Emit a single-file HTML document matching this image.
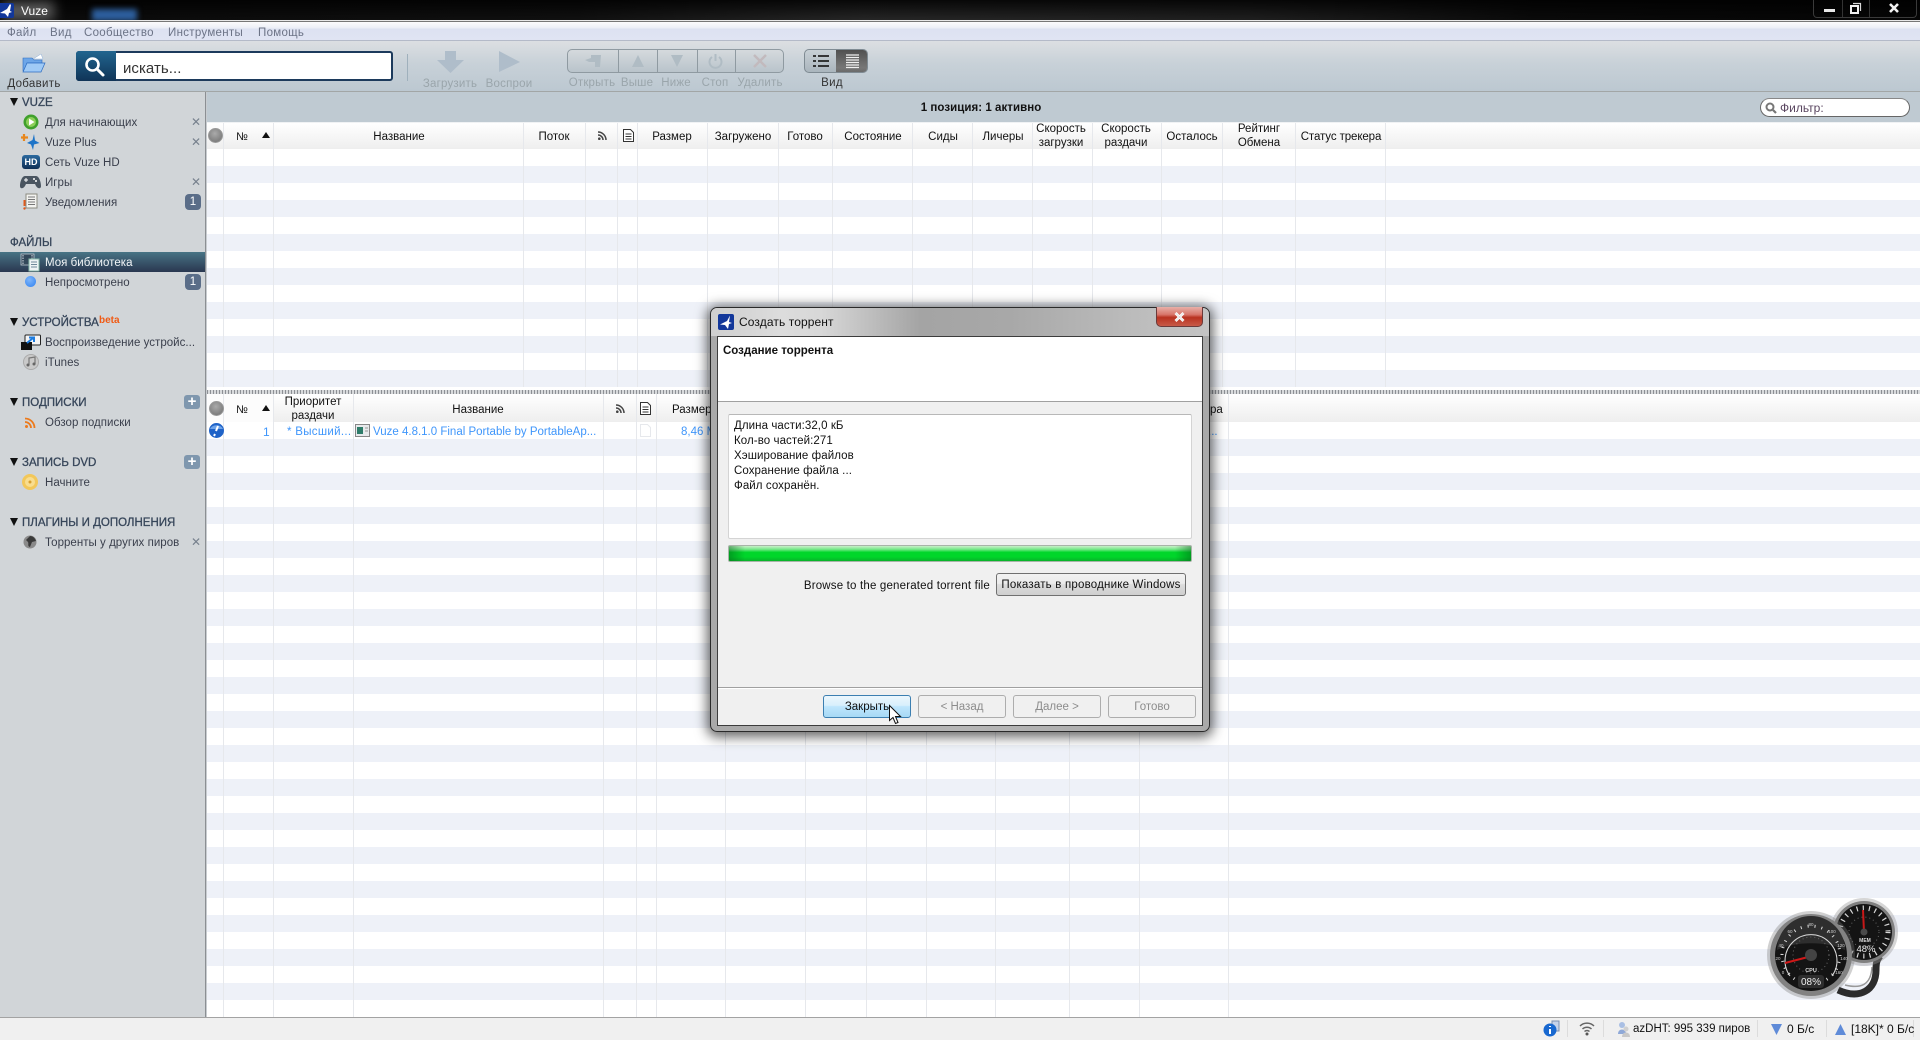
<!DOCTYPE html>
<html><head><meta charset="utf-8"><title>Vuze</title>
<style>
html,body{margin:0;padding:0;width:1920px;height:1040px;overflow:hidden;background:#fff}
*{box-sizing:border-box}
body{position:relative;font-family:"Liberation Sans","DejaVu Sans",sans-serif;font-size:11.5px;color:#111}
.a{position:absolute}
.t{position:absolute;white-space:nowrap;line-height:14px;height:14px;margin-top:1px}
.c{transform:translateX(-50%)}
.hd{text-align:center;line-height:13.5px;height:27px;font-size:11.5px;color:#111}
svg{position:absolute;overflow:visible}
.m{color:#6c7386;font-size:11.5px;top:25px;letter-spacing:.3px}
.s{color:#3a3f4c;font-size:11.5px;left:45px;letter-spacing:.03px}
.h{color:#37465a;font-size:11.5px;left:22px;-webkit-text-stroke:.3px #37465a}
.tri{position:absolute;left:10px;width:0;height:0;border-left:4px solid transparent;border-right:4px solid transparent;border-top:8px solid #111}
.x{position:absolute;left:191px;color:#77818d;font-size:12px;line-height:12px;font-weight:bold}
.bd{position:absolute;left:185px;width:16px;height:16px;background:#5a6d88;border-radius:4px;color:#fff;text-align:center;line-height:16px;font-size:11.5px}
.pl{position:absolute;left:184px;width:16px;height:14px;background:#7f97ae;border-radius:3px;color:#fff;text-align:center;line-height:13px;font-size:15px;font-weight:bold}
.v{position:absolute;width:1px;background:#e6e8ec}
.tl{color:#9aa5ab;font-size:11.5px;top:75px;letter-spacing:.2px}
.btn{position:absolute;border:1px solid #adadad;border-radius:3px;background:#f0f0f0;color:#8c8c8c;text-align:center;font-size:11.5px;line-height:23px;height:23px}
.ln{position:absolute;left:734px;color:#111;font-size:11.5px;letter-spacing:.08px}
.sb{position:absolute;top:1020px;height:17px;width:1px;background:#dcdcdc}
.st{top:1021px;font-size:12px;color:#111}
.gd{position:absolute;top:49px;width:1px;height:24px;background:#8f9aa1}
</style></head><body>

<!-- title bar -->
<div class="a" style="left:0;top:0;width:1920px;height:20px;background:linear-gradient(90deg,#0a0a0a 0,#101010 30%,#262626 45%,#1f1f1f 65%,#0a0a0a 80%,#050505 100%)"></div>
<div class="a" style="left:0;top:0;width:1920px;height:20px;background:linear-gradient(180deg,rgba(0,0,0,.8),rgba(0,0,0,0))"></div>
<div class="a" style="left:2px;top:2px;width:52px;height:18px;background:#7c7c7c;filter:blur(6px);opacity:.75"></div>
<div class="a" style="left:92px;top:9px;width:45px;height:12px;background:#2d5f9e;filter:blur(3px)"></div>
<svg style="left:0;top:3px" width="14" height="15" viewBox="0 0 14 15"><rect x="-3" width="17" height="15" rx="2" fill="#12379a"/><path d="M10 1 7 6 0 10l5 .5L8 14l1-4 3-1-2-1 1-6z" fill="#fff"/></svg>
<div class="t" style="left:21px;top:3px;color:#fff;font-size:12px">Vuze</div>
<div class="a" style="left:1813px;top:-1px;width:104px;height:19px;border:1px solid #3a3a3a;border-top:0;border-radius:0 0 4px 4px"></div>
<div class="a" style="left:1842px;top:0;width:1px;height:17px;background:#333"></div>
<div class="a" style="left:1869px;top:0;width:1px;height:17px;background:#333"></div>
<div class="a" style="left:1824px;top:9px;width:11px;height:3px;background:#e8e8e8"></div>
<svg style="left:1850px;top:3px" width="11" height="11" viewBox="0 0 11 11"><path d="M3 .5h7.5V8" fill="none" stroke="#d8d8d8" stroke-width="1.2"/><rect x="1" y="3" width="7" height="7" fill="none" stroke="#f0f0f0" stroke-width="2"/></svg>
<svg style="left:1889px;top:3px" width="10" height="10" viewBox="0 0 10 10"><path d="M1 1l8 8M9 1l-8 8" stroke="#f2f2f2" stroke-width="2.6"/></svg>
<div class="a" style="left:0;top:20px;width:1920px;height:2px;background:#e8e8e8;border-bottom:1px solid #777"></div>

<!-- menu -->
<div class="a" style="left:0;top:22px;width:1920px;height:19px;background:linear-gradient(180deg,#fbfbfd 0,#eef0f7 30%,#dde2f2 40%,#e0e4f3 100%);border-bottom:1px solid #b4bac8"></div>
<div class="t m" style="left:7px">Файл</div>
<div class="t m" style="left:50px">Вид</div>
<div class="t m" style="left:84px">Сообщество</div>
<div class="t m" style="left:168px">Инструменты</div>
<div class="t m" style="left:258px">Помощь</div>

<!-- toolbar -->
<div class="a" style="left:0;top:41px;width:1920px;height:51px;background:linear-gradient(180deg,#dcdfe2 0,#c8d1d8 45%,#bcc8d1 100%);border-bottom:1px solid #a2a6a6"></div>
<svg style="left:22px;top:53px" width="24" height="20" viewBox="0 0 24 20"><path d="M1 5h9l2 2h8v3H5L2 18H1z" fill="#6da6e8" stroke="#2c6cc0" stroke-width=".6"/><path d="M11 6l8-5 2 5z" fill="#fff" stroke="#8fb0d8" stroke-width=".5"/><path d="M5 10h18l-4 9H1z" fill="#9fcaf6" stroke="#2c6cc0" stroke-width=".7"/></svg>
<div class="t c" style="left:34px;top:76px;color:#333;letter-spacing:.3px;font-size:11.5px">Добавить</div>
<div class="a" style="left:76px;top:51px;width:317px;height:30px;border-radius:3px;background:#fff;border:2px solid #1c3a5c"></div>
<div class="a" style="left:76px;top:51px;width:40px;height:30px;border-radius:3px 0 0 3px;background:linear-gradient(180deg,#21658f,#103457)"></div>
<svg style="left:84px;top:56px" width="22" height="21" viewBox="0 0 22 21"><circle cx="8.5" cy="8.5" r="6" fill="none" stroke="#fff" stroke-width="2.6"/><path d="M13 13l6 6" stroke="#fff" stroke-width="3" stroke-linecap="round"/></svg>
<div class="t" style="left:123px;top:60px;font-size:15px;height:16px;line-height:16px;color:#333;letter-spacing:.05px">искать...</div>
<div class="a" style="left:407px;top:54px;width:1px;height:27px;background:#9fb0bc"></div>
<svg style="left:436px;top:50px" width="29" height="23" viewBox="0 0 29 23"><path d="M9 1h11v9h8L14.5 23 1 10h8z" fill="#afbdca"/></svg>
<svg style="left:498px;top:50px" width="22" height="23" viewBox="0 0 22 23"><path d="M1 1l21 11L1 22z" fill="#afbdca"/></svg>
<div class="t c tl" style="left:450px;top:76px">Загрузить</div>
<div class="t c tl" style="left:509px;top:76px">Воспрои</div>
<div class="a" style="left:567px;top:49px;width:217px;height:24px;border:1px solid #8f9aa1;border-radius:5px;background:linear-gradient(180deg,#d5dadd,#b9c4cb)"></div>
<div class="gd" style="left:618px"></div><div class="gd" style="left:657px"></div><div class="gd" style="left:697px"></div><div class="gd" style="left:735px"></div>
<svg style="left:584px;top:53px" width="18" height="15" viewBox="0 0 18 15"><path d="M1 7l6-2V2h10l-1 12h-5V9H5z" fill="#b0bcc4"/></svg>
<svg style="left:631px;top:54px" width="14" height="13" viewBox="0 0 14 13"><path d="M7 1l6 12H1z" fill="#b0bcc4"/></svg>
<svg style="left:670px;top:54px" width="14" height="13" viewBox="0 0 14 13"><path d="M1 1h12L7 13z" fill="#b0bcc4"/></svg>
<svg style="left:708px;top:53px" width="15" height="16" viewBox="0 0 15 16"><path d="M4 4a6 6 0 1 0 7 0" fill="none" stroke="#b0bcc4" stroke-width="2"/><path d="M7.500 1v7" stroke="#b0bcc4" stroke-width="2"/></svg>
<svg style="left:753px;top:54px" width="14" height="14" viewBox="0 0 14 14"><path d="M1 1l12 12M13 1L1 13" stroke="#c2babd" stroke-width="2.5"/></svg>
<div class="t c tl" style="left:592px">Открыть</div>
<div class="t c tl" style="left:637px">Выше</div>
<div class="t c tl" style="left:676px">Ниже</div>
<div class="t c tl" style="left:715px">Стоп</div>
<div class="t c tl" style="left:760px">Удалить</div>
<div class="a" style="left:804px;top:49px;width:64px;height:24px;border:1px solid #7f8b93;border-radius:5px;background:linear-gradient(180deg,#c8d0d6,#aab5bd)"></div>
<div class="a" style="left:836px;top:50px;width:31px;height:22px;border-radius:0 4px 4px 0;background:linear-gradient(180deg,#505050,#777 80%,#6a6a6a)"></div>
<svg style="left:813px;top:55px" width="16" height="12" viewBox="0 0 16 12"><path d="M0 1h3M5 1h11M0 6h3M5 6h11M0 11h3M5 11h11" stroke="#222" stroke-width="1.8"/></svg>
<svg style="left:846px;top:54px" width="13" height="14" viewBox="0 0 13 14"><path d="M0 1h13M0 3.500h13M0 6h13M0 8.500h13M0 11h13M0 13.500h13" stroke="#f0f0f0" stroke-width="1.200"/></svg>
<div class="t c" style="left:832px;top:75px;color:#333;letter-spacing:.3px">Вид</div>

<!-- sidebar -->
<div class="a" style="left:0;top:92px;width:205px;height:925px;background:#d1d5d8"></div>
<div class="a" style="left:205px;top:92px;width:1px;height:925px;background:#8b8f93"></div>
<div class="a" style="left:206px;top:92px;width:1px;height:925px;background:#c8ccd0"></div>

<div class="tri" style="top:98px"></div><div class="t h" style="top:95px">VUZE</div>
<svg style="left:23px;top:114px" width="16" height="16" viewBox="0 0 16 16"><circle cx="8" cy="8" r="7.500" fill="#3fa02c"/><circle cx="8" cy="8" r="5" fill="#8dcf5a"/><path d="M6 4.500l5.500 3.500L6 11.500z" fill="#fff"/></svg>
<div class="t s" style="top:115px">Для начинающих</div><div class="x" style="top:116px">✕</div>
<svg style="left:20px;top:133px" width="20" height="18" viewBox="0 0 20 18"><path d="M4 1v7M1 4.500h7" stroke="#e8871c" stroke-width="2.200"/><path d="M14 1l-1.500 6L7 10l4 1.500 2 5.500 1-5.500 5.500-1.500-4.500-2.500z" fill="#1d74c8"/></svg>
<div class="t s" style="top:135px">Vuze Plus</div><div class="x" style="top:136px">✕</div>
<div class="a" style="left:22px;top:155px;width:18px;height:14px;background:linear-gradient(180deg,#2c6aa0,#0e2f55);border-radius:3px;color:#fff;font-size:9px;font-weight:bold;text-align:center;line-height:14px">HD</div>
<div class="t s" style="top:155px">Сеть Vuze HD</div>
<svg style="left:20px;top:175px" width="21" height="14" viewBox="0 0 21 14"><path d="M5 1h11c3 0 5 6 5 10 0 3-3 3-5 0l-1-2H6l-1 2c-2 3-5 3-5 0C0 7 2 1 5 1z" fill="#4a5560"/><path d="M4 5h4M6 3v4" stroke="#fff"/><circle cx="14" cy="4" r="1" fill="#fff"/><circle cx="16" cy="6" r="1" fill="#fff"/></svg>
<div class="t s" style="top:175px">Игры</div><div class="x" style="top:176px">✕</div>
<svg style="left:23px;top:193px" width="15" height="18" viewBox="0 0 15 18"><rect x="3" y="1" width="11" height="14" fill="#f3f3f0" stroke="#8b8b80"/><path d="M5 4h7M5 6.500h7M5 9h7M5 11.500h7" stroke="#777"/><path d="M1.500 7v6" stroke="#e0591c" stroke-width="2"/><circle cx="1.500" cy="15.500" r="1.200" fill="#e0591c"/></svg>
<div class="t s" style="top:195px">Уведомления</div><div class="bd" style="top:194px">1</div>

<div class="t h" style="left:10px;top:235px">ФАЙЛЫ</div>
<div class="a" style="left:0;top:252px;width:205px;height:20px;background:linear-gradient(180deg,#487485,#2a3750)"></div>
<svg style="left:20px;top:253px" width="20" height="19" viewBox="0 0 20 19"><rect x="1" y="1" width="13" height="11" fill="#33485a" stroke="#cfd8dd" stroke-width=".7"/><path d="M3 2v9M12 2v9" stroke="#d8e0e5" stroke-dasharray="1.500 1"/><rect x="9" y="6" width="10" height="12" fill="#eef2f5" stroke="#8ba"/><path d="M11 9h6M11 11.500h6M11 14h6" stroke="#70889a"/></svg>
<div class="t s" style="top:255px;color:#f2f5f7">Моя библиотека</div>
<div class="a" style="left:25px;top:276px;width:11px;height:11px;border-radius:50%;background:radial-gradient(circle at 40% 35%,#7eb6fb,#2f80f0)"></div>
<div class="t s" style="top:275px">Непросмотрено</div><div class="bd" style="top:274px">1</div>

<div class="tri" style="top:318px"></div><div class="t h" style="top:315px">УСТРОЙСТВА</div>
<div class="t" style="left:99px;top:313px;color:#f05a14;font-weight:bold;font-size:10px">beta</div>
<svg style="left:21px;top:334px" width="20" height="16" viewBox="0 0 20 16"><rect x="4" y="1" width="15.500" height="10" rx="1" fill="#f5f5f5" stroke="#222"/><rect x="0" y="8" width="11" height="8" fill="#111"/><path d="M6 9l6-5M8 3.500h5V8" fill="none" stroke="#1c7ce0" stroke-width="2"/></svg>
<div class="t s" style="top:335px">Воспроизведение устройс...</div>
<svg style="left:23px;top:354px" width="16" height="16" viewBox="0 0 16 16"><circle cx="8" cy="8" r="7.500" fill="#c9c9c9" stroke="#aaa"/><path d="M6 11V4l6-1v7" fill="none" stroke="#777" stroke-width="1.200"/><circle cx="5" cy="11" r="1.500" fill="#666"/><circle cx="11" cy="10" r="1.500" fill="#666"/></svg>
<div class="t s" style="top:355px">iTunes</div>

<div class="tri" style="top:398px"></div><div class="t h" style="top:395px">ПОДПИСКИ</div>
<div class="pl" style="top:395px">+</div>
<svg style="left:25px;top:417px" width="11" height="11" viewBox="0 0 11 11"><circle cx="1.500" cy="9.500" r="1.500" fill="#ec7a1c"/><path d="M0 5a6 6 0 0 1 6 6M0 1.500A9.500 9.500 0 0 1 9.500 11" fill="none" stroke="#ec7a1c" stroke-width="1.800"/></svg>
<div class="t s" style="top:415px">Обзор подписки</div>

<div class="tri" style="top:458px"></div><div class="t h" style="top:455px">ЗАПИСЬ DVD</div>
<div class="pl" style="top:455px">+</div>
<svg style="left:22px;top:474px" width="16" height="16" viewBox="0 0 16 16"><circle cx="8" cy="8" r="8" fill="#f2c75a"/><circle cx="8" cy="8" r="5" fill="#f8dd90"/><circle cx="8" cy="8" r="1.500" fill="#d8a030"/></svg>
<div class="t s" style="top:475px">Начните</div>

<div class="tri" style="top:518px"></div><div class="t h" style="top:515px">ПЛАГИНЫ И ДОПОЛНЕНИЯ</div>
<svg style="left:23px;top:535px" width="14" height="14" viewBox="0 0 14 14"><circle cx="7" cy="7" r="6.500" fill="#8a8a8a"/><path d="M7 1c3 0 5 2 6 5l-4 1-2 5c-3-1-1-3-2-5L3 5z" fill="#3a3a3a"/></svg>
<div class="t s" style="top:535px">Торренты у других пиров</div><div class="x" style="top:536px">✕</div>

<!-- header bar -->
<div class="a" style="left:207px;top:92px;width:1713px;height:31px;background:#bfcad2;border-bottom:1px solid #f0f2f4"></div>
<div class="t c" style="left:981px;top:100px;font-weight:bold;font-size:11.5px;color:#111;letter-spacing:.05px">1 позиция: 1 активно</div>
<div class="a" style="left:1760px;top:98px;width:150px;height:19px;border:1px solid #666;border-radius:10px;background:#fff;border-top-color:#888"></div>
<svg style="left:1765px;top:102px" width="12" height="12" viewBox="0 0 12 12"><circle cx="5" cy="5" r="3.500" fill="none" stroke="#777" stroke-width="2"/><path d="M8 8l3 3" stroke="#777" stroke-width="2.200"/></svg>
<div class="t" style="left:1780px;top:100px;color:#5a4660;font-size:12px">Фильтр:</div>

<!-- top table -->
<div class="a" style="left:207px;top:123px;width:1713px;height:26px;background:linear-gradient(180deg,#fff,#eeeeee)"></div>
<div class="a" style="left:207px;top:149px;width:1713px;height:238px;background:repeating-linear-gradient(180deg,#fff 0,#fff 17px,#eef1f8 17px,#eef1f8 34px)"></div>
<div class="a" style="left:207px;top:387px;width:1713px;height:3px;background:#fff"></div>
<div class="v" style="left:223px;top:123px;height:264px"></div><div class="v" style="left:273px;top:123px;height:264px"></div>
<div class="v" style="left:523px;top:123px;height:264px"></div><div class="v" style="left:585px;top:123px;height:264px"></div>
<div class="v" style="left:617px;top:123px;height:264px"></div><div class="v" style="left:637px;top:123px;height:264px"></div>
<div class="v" style="left:707px;top:123px;height:264px"></div><div class="v" style="left:778px;top:123px;height:264px"></div>
<div class="v" style="left:832px;top:123px;height:264px"></div><div class="v" style="left:912px;top:123px;height:264px"></div>
<div class="v" style="left:972px;top:123px;height:264px"></div><div class="v" style="left:1032px;top:123px;height:264px"></div>
<div class="v" style="left:1092px;top:123px;height:264px"></div><div class="v" style="left:1161px;top:123px;height:264px"></div>
<div class="v" style="left:1222px;top:123px;height:264px"></div><div class="v" style="left:1295px;top:123px;height:264px"></div>
<div class="v" style="left:1385px;top:123px;height:264px"></div>
<div class="a" style="left:208px;top:128px;width:15px;height:15px;border-radius:50%;background:radial-gradient(circle at 45% 35%,#aaa,#6e6e6e);border:1px solid #999"></div>
<div class="t c" style="left:242px;top:129px;font-size:11px">№</div>
<div class="a" style="left:262px;top:132px;width:0;height:0;border-left:4px solid transparent;border-right:4px solid transparent;border-bottom:6px solid #111"></div>
<div class="t c" style="left:399px;top:129px">Название</div>
<div class="t c" style="left:554px;top:129px">Поток</div>
<svg style="left:598px;top:131px" width="9" height="9" viewBox="0 0 9 9"><circle cx="1.300" cy="7.700" r="1.300" fill="#444"/><path d="M0 4a5 5 0 0 1 5 5M0 1a8 8 0 0 1 8 8" fill="none" stroke="#444" stroke-width="1.500"/></svg>
<svg style="left:623px;top:129px" width="11" height="13" viewBox="0 0 11 13"><path d="M.5.500h7l3 3v9H.5z" fill="#fff" stroke="#333"/><path d="M2.500 5h6M2.500 7.500h6M2.500 10h6" stroke="#333"/></svg>
<div class="t c" style="left:672px;top:129px">Размер</div>
<div class="t c" style="left:743px;top:129px">Загружено</div>
<div class="t c" style="left:805px;top:129px">Готово</div>
<div class="t c" style="left:873px;top:129px">Состояние</div>
<div class="t c" style="left:943px;top:129px">Сиды</div>
<div class="t c" style="left:1003px;top:129px">Личеры</div>
<div class="t c hd" style="left:1061px;top:122px">Скорость<br>загрузки</div>
<div class="t c hd" style="left:1126px;top:122px">Скорость<br>раздачи</div>
<div class="t c" style="left:1192px;top:129px">Осталось</div>
<div class="t c hd" style="left:1259px;top:122px">Рейтинг<br>Обмена</div>
<div class="t c" style="left:1341px;top:129px;letter-spacing:-.1px">Статус трекера</div>

<!-- splitter -->
<div class="a" style="left:207px;top:390px;width:1713px;height:4px;background:repeating-linear-gradient(90deg,#8d9095 0,#8d9095 1px,#d8dadc 1px,#d8dadc 3px)"></div>

<!-- bottom table -->
<div class="a" style="left:207px;top:394px;width:1713px;height:28px;background:linear-gradient(180deg,#fff,#eeeeee)"></div>
<div class="a" style="left:207px;top:394px;width:66px;height:28px;background:#fcfcfc"></div>
<div class="a" style="left:207px;top:422px;width:1713px;height:595px;background:repeating-linear-gradient(180deg,#fff 0,#fff 17px,#eef1f8 17px,#eef1f8 34px)"></div>
<div class="v" style="left:223px;top:394px;height:623px"></div><div class="v" style="left:273px;top:394px;height:623px"></div>
<div class="v" style="left:353px;top:394px;height:623px"></div><div class="v" style="left:603px;top:394px;height:623px"></div>
<div class="v" style="left:636px;top:394px;height:623px"></div><div class="v" style="left:656px;top:394px;height:623px"></div>
<div class="v" style="left:725px;top:394px;height:623px"></div><div class="v" style="left:805px;top:394px;height:623px"></div>
<div class="v" style="left:866px;top:394px;height:623px"></div><div class="v" style="left:926px;top:394px;height:623px"></div>
<div class="v" style="left:995px;top:394px;height:623px"></div><div class="v" style="left:1069px;top:394px;height:623px"></div>
<div class="v" style="left:1139px;top:394px;height:623px"></div><div class="v" style="left:1228px;top:394px;height:623px"></div>
<div class="a" style="left:209px;top:401px;width:15px;height:15px;border-radius:50%;background:radial-gradient(circle at 45% 35%,#aaa,#6e6e6e);border:1px solid #999"></div>
<div class="t c" style="left:242px;top:402px;font-size:11px">№</div>
<div class="a" style="left:262px;top:405px;width:0;height:0;border-left:4px solid transparent;border-right:4px solid transparent;border-bottom:6px solid #111"></div>
<div class="t c hd" style="left:313px;top:395px">Приоритет<br>раздачи</div>
<div class="t c" style="left:478px;top:402px">Название</div>
<svg style="left:616px;top:404px" width="9" height="9" viewBox="0 0 9 9"><circle cx="1.300" cy="7.700" r="1.300" fill="#444"/><path d="M0 4a5 5 0 0 1 5 5M0 1a8 8 0 0 1 8 8" fill="none" stroke="#444" stroke-width="1.500"/></svg>
<svg style="left:640px;top:402px" width="11" height="13" viewBox="0 0 11 13"><path d="M.5.500h7l3 3v9H.5z" fill="#fff" stroke="#333"/><path d="M2.500 5h6M2.500 7.500h6M2.500 10h6" stroke="#333"/></svg>
<div class="t" style="left:672px;top:402px">Размер</div>
<div class="t" style="left:1210px;top:402px">ра</div>
<svg style="left:209px;top:423px" width="15" height="15" viewBox="0 0 15 15"><circle cx="7.500" cy="7.500" r="7.500" fill="#1f63c8"/><path d="M1 6a7 6 0 0 1 13 0z" fill="#6ea4ea"/><path d="M9 3l-2 5M6 11l-1 2" stroke="#fff" stroke-width="2"/></svg>
<div class="t" style="left:263px;top:424px;color:#3f96fb;font-size:12px">1</div>
<div class="t" style="left:287px;top:424px;color:#3f96fb;letter-spacing:.3px">* Высший...</div>
<svg style="left:355px;top:424px" width="15" height="13" viewBox="0 0 15 13"><rect x=".5" y=".5" width="14" height="12" fill="#e8eaec" stroke="#888"/><rect x="2" y="3" width="6" height="7" fill="#2f7d6a"/><path d="M10 4h3M10 7h3" stroke="#999"/></svg>
<div class="t" style="left:373px;top:424px;color:#3f96fb">Vuze 4.8.1.0 Final Portable by PortableAp...</div>
<svg style="left:640px;top:424px" width="11" height="13" viewBox="0 0 11 13"><path d="M.5.500h7l3 3v9H.5z" fill="#fff" stroke="#e6e8ec"/></svg>
<div class="t" style="left:681px;top:424px;color:#3f96fb">8,46 МБ</div>
<div class="t" style="left:1208px;top:424px;color:#3f96fb">...</div>

<!-- gauges -->
<svg style="left:1765px;top:900px" width="140" height="120" viewBox="1765 900 140 120">
<path d="M1838 990c22 10 38 0 38-20 0-8 1-10 4-14" fill="none" stroke="#2c2c2c" stroke-width="7"/>
<path d="M1845 985c16 4 26 0 27-18" fill="none" stroke="#999" stroke-width="1.500"/>
<circle cx="1864" cy="932" r="34" fill="#999" opacity=".4"/>
<circle cx="1864" cy="932" r="31" fill="#808080"/>
<circle cx="1864" cy="932" r="28" fill="#141414"/>
<circle cx="1864" cy="932" r="24" fill="none" stroke="#d8d8d8" stroke-width="5" stroke-dasharray="1.200 5"/>
<circle cx="1864" cy="932" r="15" fill="none" stroke="#666" stroke-width="1" stroke-dasharray="1 3"/>
<path d="M1864 932l-1-22" stroke="#c81818" stroke-width="2"/>
<circle cx="1864" cy="932" r="3.500" fill="#4a4a4a"/>
<text x="1865" y="942" text-anchor="middle" font-size="5" font-weight="bold" fill="#ddd" font-family="Liberation Sans">MEM</text>
<text x="1866" y="952" text-anchor="middle" font-size="9.500" fill="#eee" font-family="Liberation Sans">48%</text>
<circle cx="1811" cy="955" r="44" fill="#777" opacity=".35"/>
<circle cx="1811" cy="955" r="41" fill="#828282"/>
<circle cx="1811" cy="955" r="36" fill="#141414"/>
<path d="M1777 950a34 34 0 0 1 68 0c-18-9-50-9-68 0z" fill="#2e2e2e"/>
<path d="M1790 976a26 26 0 1 1 42 0" fill="none" stroke="#d8d8d8" stroke-width="1"/>
<circle cx="1811" cy="955" r="29" fill="none" stroke="#d8d8d8" stroke-width="3" stroke-dasharray="1 6"/>
<circle cx="1811" cy="955" r="18" fill="none" stroke="#666" stroke-width="1" stroke-dasharray="1 3"/>
<g font-size="4.500" fill="#ccc" font-family="Liberation Sans" text-anchor="middle"><text x="1811" y="926">80</text><text x="1790" y="933">60</text><text x="1832" y="933">100</text><text x="1781" y="947">40</text><text x="1841" y="947">120</text><text x="1778" y="960">20</text><text x="1844" y="960">140</text><text x="1783" y="974">0</text><text x="1839" y="974">160</text></g>
<path d="M1785 963l27-7" stroke="#d01818" stroke-width="2"/>
<circle cx="1811" cy="955" r="6" fill="#444"/>
<text x="1811" y="972" text-anchor="middle" font-size="5.500" font-weight="bold" fill="#ddd" font-family="Liberation Sans">CPU</text>
<rect x="1798" y="975" width="26" height="13" rx="3" fill="#2e2e2e"/>
<text x="1811" y="985" text-anchor="middle" font-size="10" fill="#eee" font-family="Liberation Sans">08%</text>
</svg>

<!-- status bar -->
<div class="a" style="left:0;top:1017px;width:1920px;height:23px;background:#f0f0f0;border-top:1px solid #a3a3a3"></div>
<div class="sb" style="left:1567px"></div><div class="sb" style="left:1603px"></div><div class="sb" style="left:1757px"></div><div class="sb" style="left:1826px"></div><div class="sb" style="left:1913px"></div>
<svg style="left:1543px;top:1021px" width="17" height="16" viewBox="0 0 17 16"><rect x="9" y="0" width="7" height="10" fill="#c6d3ea" stroke="#7c8fb0"/><circle cx="7" cy="9" r="6.500" fill="#1868d0"/><path d="M7 5v1M7 8v5" stroke="#fff" stroke-width="2"/></svg>
<svg style="left:1579px;top:1021px" width="16" height="15" viewBox="0 0 16 15"><path d="M1 5a10 10 0 0 1 14 0M3.500 8a6.500 6.500 0 0 1 9 0M5.500 10.500a3.500 3.500 0 0 1 5 0" fill="none" stroke="#666" stroke-width="1.500"/><circle cx="8" cy="13" r="1.500" fill="#555"/></svg>
<svg style="left:1617px;top:1021px" width="13" height="16" viewBox="0 0 13 16"><circle cx="5" cy="4" r="3" fill="#a9bfe4"/><path d="M1 13c0-6 8-6 8 0z" fill="#8fa9d8"/><circle cx="9" cy="8" r="2.500" fill="#d0d0d0"/><path d="M5 16c0-6 8-6 8 0z" fill="#c8c8c8"/></svg>
<div class="t st" style="left:1633px;font-size:11.5px">azDHT: 995 339 пиров</div>
<svg style="left:1771px;top:1024px" width="11" height="11" viewBox="0 0 11 11"><path d="M0 0h11L5.500 11z" fill="#5f8bd8"/></svg>
<div class="t st" style="left:1787px">0 Б/с</div>
<svg style="left:1835px;top:1024px" width="11" height="11" viewBox="0 0 11 11"><path d="M5.500 0L11 11H0z" fill="#5f8bd8"/></svg>
<div class="t st" style="left:1851px">[18K]* 0 Б/с</div>

<!-- dialog -->
<div class="a" style="left:710px;top:307px;width:500px;height:425px;border-radius:7px;border:1px solid #2a2a2a;box-shadow:0 2px 12px 3px rgba(0,0,0,.6);background:linear-gradient(90deg,#a9a9a9,#b6b6b6 50%,#a9a9a9)"></div>
<div class="a" style="left:711px;top:308px;width:498px;height:28px;border-radius:6px 6px 0 0;background:linear-gradient(90deg,#cfcfcf 0,#dcdcdc 14%,#d8d8d8 22%,#a4a4a4 42%,#a8a8a8 60%,#bcbcbc 85%,#c4c4c4 100%)"></div>
<svg style="left:718px;top:314px" width="16" height="16" viewBox="0 0 16 16"><rect width="16" height="16" rx="2" fill="#12379a"/><path d="M12 1.500 9 7 2 10.500l5 .5L10 15l1-5 3-1-3-1 1-6.500z" fill="#fff"/></svg>
<div class="t" style="left:739px;top:314px;font-size:12px;letter-spacing:.1px;color:#111">Создать торрент</div>
<div class="a" style="left:1156px;top:307px;width:47px;height:20px;border-radius:0 0 5px 5px;border:1px solid #6b3a3a;border-top:0;background:linear-gradient(180deg,#e8b0a8 0,#d8756a 40%,#b83220 55%,#c85a48 100%)"></div>
<svg style="left:1174px;top:312px" width="11" height="10" viewBox="0 0 11 10"><path d="M1.500 1l8 8M9.500 1l-8 8" stroke="#fff" stroke-width="2.800"/><path d="M1.500 1l8 8M9.500 1l-8 8" stroke="#555" stroke-width=".5" opacity=".4"/></svg>

<div class="a" style="left:717px;top:336px;width:486px;height:390px;background:#f0f0f0;border:1px solid #3c3c3c"></div>
<div class="a" style="left:718px;top:337px;width:484px;height:65px;background:#fff;border-bottom:1px solid #a0a0a0"></div>
<div class="t" style="left:723px;top:343px;font-weight:bold;font-size:11.5px;color:#111">Создание торрента</div>
<div class="a" style="left:728px;top:414px;width:464px;height:125px;background:#fff;border:1px solid #d4d4d4;border-top-color:#b8b8b8;border-radius:2px"></div>
<div class="t ln" style="top:418px">Длина части:32,0 кБ</div>
<div class="t ln" style="top:433px">Кол-во частей:271</div>
<div class="t ln" style="top:448px">Хэширование файлов</div>
<div class="t ln" style="top:463px">Сохранение файла ...</div>
<div class="t ln" style="top:478px">Файл сохранён.</div>
<div class="a" style="left:728px;top:545px;width:464px;height:17px;border:1px solid #a8b4a8;border-radius:2px;background:linear-gradient(180deg,#c8f0c8 0,#78e88a 22%,#00d62a 42%,#00d62a 72%,#08b22a 100%);overflow:hidden"><div class="a" style="left:0;top:0;width:16px;height:15px;background:linear-gradient(90deg,rgba(0,90,20,.45),rgba(0,90,20,0))"></div><div class="a" style="right:0;top:0;width:16px;height:15px;background:linear-gradient(270deg,rgba(0,90,20,.45),rgba(0,90,20,0))"></div></div>
<div class="t" style="right:930px;top:578px;color:#111;font-size:11.5px;letter-spacing:.18px">Browse to the generated torrent file</div>
<div class="a" style="left:996px;top:573px;width:190px;height:23px;border:1px solid #707070;border-radius:3px;background:linear-gradient(180deg,#f2f2f2,#ebebeb 45%,#dcdcdc 50%,#cfcfcf);text-align:center;line-height:23px;font-size:11.5px;color:#111;white-space:nowrap;letter-spacing:.2px">Показать в проводнике Windows</div>
<div class="a" style="left:718px;top:687px;width:484px;height:1px;background:#a0a0a0"></div>
<div class="a" style="left:718px;top:688px;width:484px;height:1px;background:#fff"></div>
<div class="a" style="left:823px;top:695px;width:88px;height:23px;border:1px solid #3c7fb1;border-radius:3px;background:linear-gradient(180deg,#ecf7fd,#d8effc 45%,#bee6fd 50%,#a7d9f5);text-align:center;line-height:23px;font-size:11.5px;color:#111">Закрыть</div>
<div class="btn" style="left:918px;top:695px;width:88px">&lt; Назад</div>
<div class="btn" style="left:1013px;top:695px;width:88px">Далее &gt;</div>
<div class="btn" style="left:1108px;top:695px;width:88px">Готово</div>
<svg style="left:889px;top:705px" width="12" height="20" viewBox="0 0 12 20"><path d="M.5.500v15l3.500-3 2.500 6 2.500-1-2.500-6h5z" fill="#fff" stroke="#111" stroke-width="1"/></svg>
</body></html>
